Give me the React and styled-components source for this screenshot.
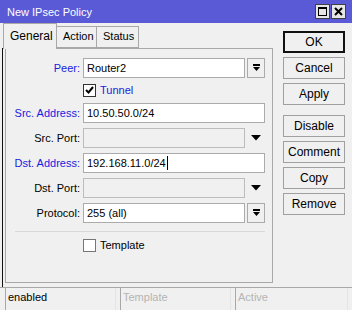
import React from "react";
import styled, { createGlobalStyle } from "styled-components";

const GlobalStyle = createGlobalStyle`
  body {
    margin: 0;
    background: #f0f0f0;
    font-family: "Liberation Sans", Arial, sans-serif;
    font-size: 11px;
  }
`;

const BLUE = "#1a1ae0";

const Window = styled.div`
  width: 352px;
  height: 310px;
  overflow: hidden;
  background: #f0f0f0;
  display: flex;
  flex-direction: column;
`;

const TitleBar = styled.div`
  height: 23px;
  flex: none;
  background: #5a5ad6;
  display: flex;
  align-items: center;
  justify-content: space-between;
  padding: 0 6px 0 7px;
  color: #fff;
  font-size: 11px;
`;

const TitleButtons = styled.div`
  display: flex;
  gap: 1px;
`;

const TitleBtn = styled.div`
  width: 13px;
  height: 13px;
  border: 1px solid #404040;
  background: #e6e6e6;
  display: flex;
  align-items: center;
  justify-content: center;
`;

const Body = styled.div`
  flex: 1;
  display: flex;
  min-height: 0;
`;

const Main = styled.div`
  width: 273px;
  display: flex;
  flex-direction: column;
  padding-left: 2px;
  box-sizing: border-box;
`;

const Tabs = styled.div`
  display: flex;
  align-items: flex-end;
  height: 25px;
  margin-left: 1px;
  position: relative;
  z-index: 1;
`;

const Tab = styled.div`
  box-sizing: border-box;
  height: ${(p) => (p.$active ? "26px" : "22px")};
  margin-bottom: ${(p) => (p.$active ? "-1px" : "0")};
  padding: ${(p) => (p.$active ? "5px 6px 0" : "3px 6px 0")};
  border: 1px solid #a8a8a8;
  border-bottom: ${(p) => (p.$active ? "none" : "1px solid #a8a8a8")};
  border-left: ${(p) => (p.$first ? "1px solid #a8a8a8" : "none")};
  background: #f0f0f0;
  color: #000;
  font-size: ${(p) => (p.$active ? "12px" : "11px")};
  width: ${(p) => p.$w}px;
`;

const PanelWrap = styled.div`
  flex: 1;
  border-left: 1px solid #111;
  padding: 0 0 4px 2px;
  display: flex;
  flex-direction: column;
`;

const Panel = styled.div`
  flex: 1;
  border: 1px solid #a8a8a8;
  padding: 9px 7px 0 0;
  display: flex;
  flex-direction: column;
`;

const Row = styled.div`
  display: flex;
  align-items: center;
  height: 20px;
  margin-bottom: ${(p) => p.$mb ?? 5}px;
`;

const Label = styled.div`
  width: 74px;
  flex: none;
  text-align: right;
  margin-right: 3px;
  color: ${(p) => (p.$blue ? BLUE : "#000")};
`;

const Field = styled.div`
  flex: 1;
  height: 20px;
  box-sizing: border-box;
  border: 1px solid ${(p) => (p.$disabled ? "#bcbcbc" : "#ababab")};
  background: ${(p) => (p.$disabled ? "#f0f0f0" : "#fff")};
  display: flex;
  align-items: center;
  padding-left: 3px;
  color: #000;
`;

const Caret = styled.span`
  display: inline-block;
  width: 1px;
  height: 14px;
  background: #000;
  margin-left: 1px;
`;

const DropButton = styled.div`
  width: 18px;
  height: 20px;
  box-sizing: border-box;
  flex: none;
  margin-left: 2px;
  border: 1px solid #ababab;
  background: #f0f0f0;
  display: flex;
  align-items: center;
  justify-content: center;
`;

const Arrow = styled.div`
  width: 18px;
  flex: none;
  margin-left: 2px;
  display: flex;
  align-items: center;
  justify-content: center;
`;

const CheckRow = styled.label`
  display: flex;
  align-items: center;
  gap: 4px;
  margin-left: 77px;
  color: ${(p) => (p.$blue ? BLUE : "#000")};
`;

const CheckBox = styled.span`
  width: 13px;
  height: 13px;
  box-sizing: border-box;
  border: 1px solid ${(p) => (p.$checked ? "#333" : "#777")};
  background: #fff;
  display: flex;
  align-items: center;
  justify-content: center;
`;

const Separator = styled.div`
  height: 1px;
  background: #d8d8d8;
  margin: 4px 0 3px 9px;
`;

const Side = styled.div`
  width: 62px;
  margin-left: 10px;
  padding-top: 8px;
  display: flex;
  flex-direction: column;
`;

const Button = styled.div`
  height: 22px;
  box-sizing: border-box;
  border: ${(p) => (p.$default ? "2px solid #111" : "1px solid #a0a0a0")};
  background: #f0f0f0;
  display: flex;
  align-items: center;
  justify-content: center;
  font-size: 12px;
  color: #000;
  margin-bottom: ${(p) => p.$mb ?? 4}px;
`;

const StatusBar = styled.div`
  height: 22px;
  flex: none;
  border-top: 1px solid #a8a8a8;
  display: flex;
  gap: 4px;
  padding-left: 5px;
`;

const StatusField = styled.div`
  width: ${(p) => p.$w}px;
  box-sizing: border-box;
  border-left: 1px solid #a8a8a8;
  border-right: 1px solid #e4e4e4;
  padding: 3px 0 0 2px;
  color: ${(p) => (p.$dim ? "#b4b4b4" : "#000")};
`;

const DropIcon = () => (
  <svg width="9" height="8" viewBox="0 0 9 8">
    <rect x="1" y="0" width="7" height="2" fill="#000" />
    <path d="M1 3 H8 L4.5 7 Z" fill="#000" />
  </svg>
);

const DownArrow = () => (
  <svg width="10" height="6" viewBox="0 0 10 6">
    <path d="M0 0 H10 L5 5.5 Z" fill="#000" />
  </svg>
);

const Check = () => (
  <svg width="9" height="8" viewBox="0 0 9 8">
    <path d="M1 4 L3.5 6.5 L8 1" stroke="#000" strokeWidth="2" fill="none" />
  </svg>
);

const App = () => {
  return (
    <>
      <GlobalStyle />
      <Window>
        <TitleBar>
          <span>New IPsec Policy</span>
          <TitleButtons>
            <TitleBtn>
              <svg width="9" height="9" viewBox="0 0 9 9">
                <rect x="0.5" y="0.5" width="8" height="8" fill="none" stroke="#000" />
                <rect x="0.5" y="0.5" width="8" height="1.5" fill="#000" />
              </svg>
            </TitleBtn>
            <TitleBtn>
              <svg width="9" height="9" viewBox="0 0 9 9">
                <path d="M1 1 L8 8 M8 1 L1 8" stroke="#000" strokeWidth="2" />
              </svg>
            </TitleBtn>
          </TitleButtons>
        </TitleBar>
        <Body>
          <Main>
            <Tabs>
              <Tab $active $first $w={54}>General</Tab>
              <Tab $w={40}>Action</Tab>
              <Tab $w={42}>Status</Tab>
            </Tabs>
            <PanelWrap>
              <Panel>
                <Row $mb={2}>
                  <Label $blue>Peer:</Label>
                  <Field>Router2</Field>
                  <DropButton>
                    <DropIcon />
                  </DropButton>
                </Row>
                <Row $mb={3}>
                  <CheckRow $blue>
                    <CheckBox $checked>
                      <Check />
                    </CheckBox>
                    Tunnel
                  </CheckRow>
                </Row>
                <Row>
                  <Label $blue>Src. Address:</Label>
                  <Field>10.50.50.0/24</Field>
                </Row>
                <Row>
                  <Label>Src. Port:</Label>
                  <Field $disabled />
                  <Arrow>
                    <DownArrow />
                  </Arrow>
                </Row>
                <Row>
                  <Label $blue>Dst. Address:</Label>
                  <Field>
                    192.168.11.0/24
                    <Caret />
                  </Field>
                </Row>
                <Row>
                  <Label>Dst. Port:</Label>
                  <Field $disabled />
                  <Arrow>
                    <DownArrow />
                  </Arrow>
                </Row>
                <Row $mb={4}>
                  <Label>Protocol:</Label>
                  <Field>255 (all)</Field>
                  <DropButton>
                    <DropIcon />
                  </DropButton>
                </Row>
                <Separator />
                <Row>
                  <CheckRow>
                    <CheckBox />
                    Template
                  </CheckRow>
                </Row>
              </Panel>
            </PanelWrap>
          </Main>
          <Side>
            <Button $default>OK</Button>
            <Button>Cancel</Button>
            <Button $mb={10}>Apply</Button>
            <Button>Disable</Button>
            <Button>Comment</Button>
            <Button>Copy</Button>
            <Button>Remove</Button>
          </Side>
        </Body>
        <StatusBar>
          <StatusField $w={111}>enabled</StatusField>
          <StatusField $w={111} $dim>Template</StatusField>
          <StatusField $w={113} $dim>Active</StatusField>
        </StatusBar>
      </Window>
    </>
  );
};

export default App;
